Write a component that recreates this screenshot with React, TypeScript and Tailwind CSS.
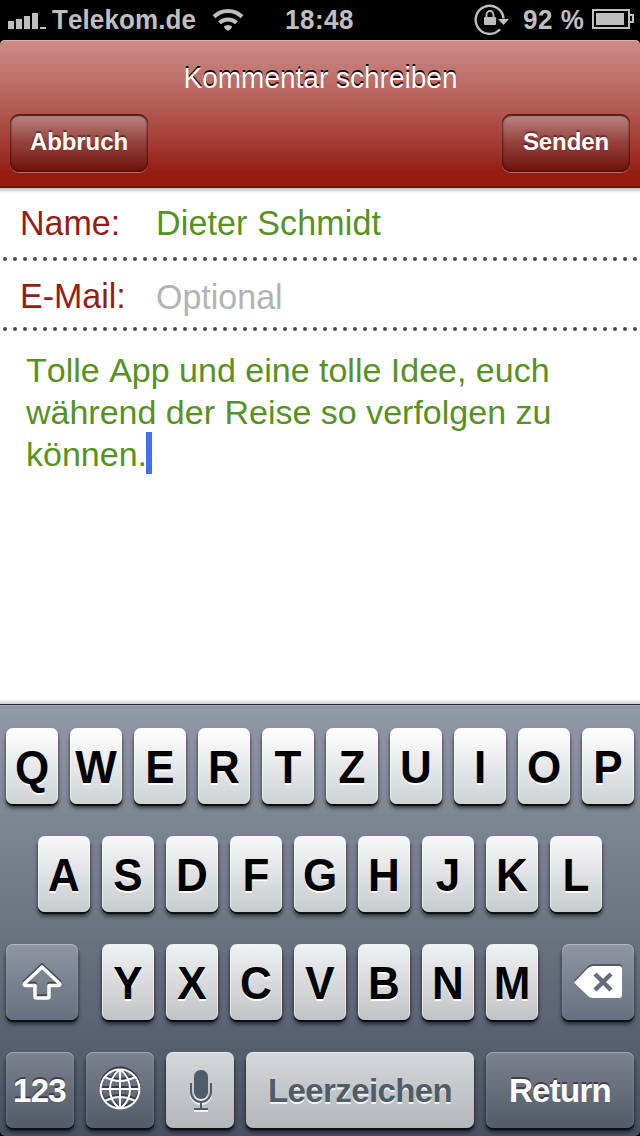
import type { ReactNode } from "react";

const letterKey =
  "h-[76px] w-[52px] rounded-[7px] text-center text-[44px] leading-[78px] font-bold text-black shadow-[0_2px_1px_#0c0f14,0_4px_4px_rgba(0,0,0,0.6),inset_1px_0_0_rgba(255,255,255,0.5),inset_-1px_0_0_rgba(255,255,255,0.5)] [text-shadow:0_2px_0_rgba(255,255,255,0.9)]";
const darkKey =
  "flex h-[76px] items-center justify-center rounded-[7px] text-[33px] leading-[76px] font-bold text-white shadow-[0_2px_1px_#0c0f14,0_4px_4px_rgba(0,0,0,0.6),inset_0_1px_0_rgba(255,255,255,0.3),inset_1px_0_0_rgba(255,255,255,0.1),inset_-1px_0_0_rgba(255,255,255,0.1)] [text-shadow:0_-2px_0_#3a404b]";
const lightKey =
  "flex h-[76px] items-center justify-center rounded-[7px] bg-linear-to-b from-[#d5d8da] to-[#b4b6ba] text-[33px] leading-[76px] font-bold text-[#515c69] shadow-[0_2px_1px_#0c0f14,0_4px_4px_rgba(0,0,0,0.6),inset_0_1px_0_rgba(255,255,255,0.4)] [text-shadow:0_2px_0_#f2f2f2]";

function Letters({ letters, tone }: { letters: string; tone: string }) {
  return (
    <div className="flex gap-3">
      {letters.split("").map((l) => (
        <div key={l} className={`${letterKey} ${tone}`}>
          <span className="block scale-y-[1.05]">{l}</span>
        </div>
      ))}
    </div>
  );
}

function HeaderButton({ children, width }: { children: ReactNode; width: string }) {
  return (
    <button
      className={`${width} h-[58px] rounded-[9px] bg-linear-to-b from-[#bc8683] via-[#93403b] via-50% to-[#6f0f09] text-center text-[24px] leading-[56px] font-bold tracking-[-0.1px] text-white shadow-[0_1px_0_rgba(255,255,255,0.35),inset_0_2px_1px_rgba(50,20,20,0.75),inset_0_0_2px_1px_rgba(60,10,8,0.7)] [text-shadow:0_-2px_1px_rgba(50,0,0,0.45)]`}
    >
      <span className="block pb-0.5">{children}</span>
    </button>
  );
}

function DottedLine() {
  return (
    <svg className="block h-1 w-full" viewBox="0 0 640 4">
      <line x1="5" y1="2" x2="640" y2="2" stroke="#47474a" strokeWidth="4" strokeLinecap="round" strokeDasharray="0 10" />
    </svg>
  );
}

function StatusBar() {
  return (
    <div className="flex h-10 items-start bg-black text-[26px] leading-10 font-bold text-[#bfbfbf]">
      <svg className="ml-2 h-10 w-[38px]" viewBox="8 0 38 40" fill="#bfbfbf">
        <path d="M8 21h6v8H8zM16 19h6v10h-6zM24 16h6v13h-6zM32 13h6v16h-6zM40 27h6v2h-6z" />
      </svg>
      <span className="ml-[6px] w-[148px] scale-y-[1.04] tracking-[0.1px] whitespace-nowrap">Telekom.de</span>
      <svg className="ml-[10px] h-10 w-[36px]" viewBox="210 0 36 40" fill="none" stroke="#bfbfbf" strokeWidth="4">
        <path d="M214 16.7a20 20 0 0 1 28 0M219.500 22.8a12.3 12.3 0 0 1 17 0" />
        <path d="M224 26.500a6 6 0 0 1 8 0q0 2-4 4.500q-4-2.500-4-4.500z" fill="#bfbfbf" stroke="none" />
      </svg>
      <span className="ml-[39px] w-[80px] scale-y-[1.04] tracking-[0.5px] whitespace-nowrap">18:48</span>
      <svg className="ml-[109px] h-10 w-[38px]" viewBox="474 0 38 40" fill="none" stroke="#bfbfbf">
        <path d="M500 29.3A14 14 0 1 1 503.6 18.500" strokeWidth="2.4" />
        <path d="M498 19h11l-5.500 6z" fill="#bfbfbf" stroke="none" />
        <rect x="484" y="17" width="12" height="8" rx="1" fill="#bfbfbf" stroke="none" />
        <path d="M486.500 17v-2.500a3.500 3.500 0 0 1 7 0V17" strokeWidth="1.800" />
      </svg>
      <span className="ml-[11px] w-[62px] scale-y-[1.04] tracking-[0.5px] whitespace-nowrap">92 %</span>
      <svg className="ml-[7px] h-10 w-[44px]" viewBox="592 0 44 40">
        <path d="M593 10h36v18h-36zM630 15h3v7h-3" fill="none" stroke="#bfbfbf" strokeWidth="2" />
        <path d="M596 13h28v12h-28z" fill="#bfbfbf" />
      </svg>
    </div>
  );
}

function ShiftIcon() {
  const d = "M42 967 24.500 983.500Q23.500 985.500 26 985.500H35V996.500Q35 998 36.500 998H47.500Q49 998 49 996.500V985.500H58Q60.500 985.500 59.500 983.500Z";
  return (
    <svg className="h-[76px] w-[72px]" viewBox="6 944 72 76" fill="none" strokeWidth="3.600" strokeLinejoin="round">
      <path d={d} stroke="#414854" transform="translate(0 -2)" />
      <path d={d} stroke="#fff" />
    </svg>
  );
}

function BackspaceIcon() {
  const d = "M574 982.500 587.500 968.500Q590 966 593 966H619Q622 966 622 969V995Q622 998 619 998H593Q590 998 587.500 995.500Z";
  return (
    <svg className="h-[76px] w-[72px]" viewBox="562 944 72 76">
      <path d={d} fill="#505865" transform="translate(0 -2)" />
      <path d={d} fill="#fff" />
      <path d="m595 974 16 16m0-16-16 16" stroke="#656d7c" strokeWidth="4.500" />
    </svg>
  );
}

function GlobeIcon() {
  const d =
    "M100.600 1089a19.400 19.400 0 1 0 38.800 0a19.400 19.400 0 1 0-38.800 0M101 1089h38M120 1070v38M119 1070c-12 10-12 28 0 38M121 1070c12 10 12 28 0 38M105 1077q15 8 30 0M105 1101q15-8 30 0";
  return (
    <svg className="h-[76px] w-[68px]" viewBox="86 1052 68 76" fill="none" strokeWidth="2">
      <path d={d} stroke="#353b46" transform="translate(0 -2)" />
      <path d={d} stroke="#fff" />
    </svg>
  );
}

function MicIcon() {
  const shape = (color: string, dy: number) => (
    <g transform={`translate(0 ${dy})`} fill="none" stroke={color} strokeWidth="2">
      <rect x="194" y="1070" width="14" height="29" rx="6.500" fill={color} stroke="none" />
      <path d="M191 1083v9a10 10 0 0 0 20 0v-9M201 1102v8M194 1109h14" />
    </g>
  );
  return (
    <svg className="h-[76px] w-[68px]" viewBox="166 1052 68 76">
      {shape("#f2f2f2", 2)}
      {shape("#515c69", 0)}
    </svg>
  );
}

export default function App() {
  return (
    <div className="flex h-[1136px] w-[640px] flex-col overflow-hidden bg-black font-['Liberation_Sans',Arial,sans-serif] [font-kerning:none]">
      <StatusBar />
      <header className="h-[148px] rounded-t-[5px] border-b-2 border-[#6d120c] bg-linear-to-b from-[#cc8d89] via-[#b1564f] via-50% to-[#951d12] to-90% text-white shadow-[inset_0_1px_0_#dcb0ac]">
        <h1 className="h-[74px] pl-px text-center text-[28px] leading-[78px] font-normal [text-shadow:0_-2px_0_#160404]">
          <span className="block scale-y-[1.04]">Kommentar schreiben</span>
        </h1>
        <div className="flex justify-between px-[10px]">
          <HeaderButton width="w-[138px]">Abbruch</HeaderButton>
          <HeaderButton width="w-[128px]">Senden</HeaderButton>
        </div>
      </header>
      <main className="h-[516px] bg-white text-[34px]">
        <div className="flex h-[69px] bg-linear-to-b from-[#bbbbbb] to-white to-[5px] pl-5">
          <span className="w-[136px] scale-y-[1.04] leading-[70px] text-[#951d15]">Name:</span>
          <span className="scale-y-[1.04] leading-[71px] tracking-[0.15px] text-[#569222]">Dieter Schmidt</span>
        </div>
        <DottedLine />
        <div className="flex h-[66px] pl-5">
          <span className="w-[136px] scale-y-[1.04] leading-[68px] text-[#951d15]">E-Mail:</span>
          <span className="scale-y-[1.04] leading-[70px] text-[#b3b3b3]">Optional</span>
        </div>
        <DottedLine />
        <div className="h-[373px] bg-linear-to-t from-[#cccccc] to-white to-[5px] pt-[18px] pl-[26px] leading-[42px] whitespace-nowrap text-[#569222]">
          <p>Tolle App und eine tolle Idee, euch</p>
          <p>während der Reise so verfolgen zu</p>
          <p className="flex">
            können.
            <span className="-mt-px -ml-px h-[42px] w-[6px] bg-[#436df3]" />
          </p>
        </div>
      </main>
      <section className="flex h-[432px] flex-col gap-8 rounded-b-[5px] bg-linear-to-b from-[#9299a7] via-[#6b7480] via-52% to-[#465061] px-[6px] pt-6 shadow-[inset_0_1px_0_#25282d,inset_0_2px_0_#a4a6b0]">
        <Letters letters="QWERTZUIOP" tone="bg-linear-to-b from-[#ffffff] to-[#d0d1d4]" />
        <div className="pl-8">
          <Letters letters="ASDFGHJKL" tone="bg-linear-to-b from-[#f8f8f9] to-[#cacbce]" />
        </div>
        <div className="flex justify-between">
          <div className={`${darkKey} w-[72px] bg-linear-to-b from-[#8f95a2] to-[#667080]`}>
            <ShiftIcon />
          </div>
          <Letters letters="YXCVBNM" tone="bg-linear-to-b from-[#f0f1f2] to-[#c3c4c7]" />
          <div className={`${darkKey} w-[72px] bg-linear-to-b from-[#8f95a2] to-[#667080]`}>
            <BackspaceIcon />
          </div>
        </div>
        <div className="flex gap-3">
          <div className={`${darkKey} w-[68px] bg-linear-to-b from-[#7b818d] to-[#545b68]`}>
            <span className="mr-px pt-0.5 tracking-[-0.7px]">123</span>
          </div>
          <div className={`${darkKey} w-[68px] bg-linear-to-b from-[#7b818d] to-[#545b68]`}>
            <GlobeIcon />
          </div>
          <div className={`${lightKey} w-[68px]`}>
            <MicIcon />
          </div>
          <div className={`${lightKey} w-[228px]`}>
            <span className="pt-0.5 tracking-[-0.6px]">Leerzeichen</span>
          </div>
          <div className={`${darkKey} w-[148px] bg-linear-to-b from-[#7b818d] to-[#545b68]`}>
            <span className="pt-0.5 tracking-[-0.7px]">Return</span>
          </div>
        </div>
      </section>
    </div>
  );
}
